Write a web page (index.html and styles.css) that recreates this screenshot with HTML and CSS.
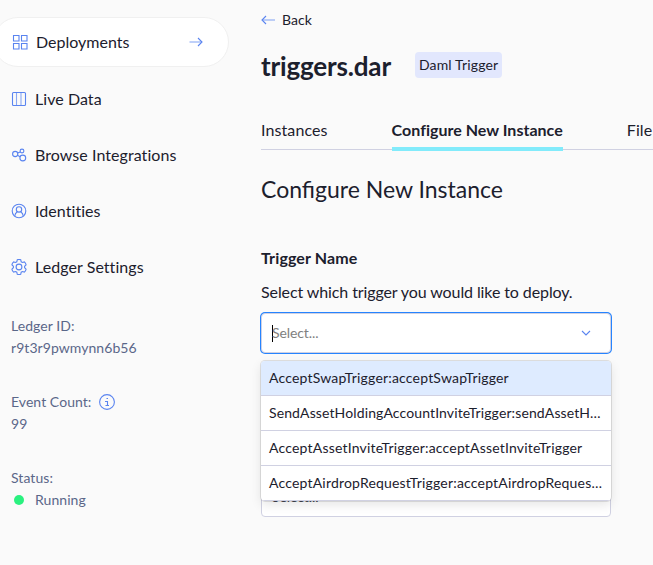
FILE: index.html
```html
<!DOCTYPE html>
<html lang="en">
<head>
<meta charset="utf-8">
<title>triggers.dar</title>
<link rel="stylesheet" href="styles.css">
</head>
<body>
<div class="app">
  <aside class="sidebar">
    <nav class="nav">
      <a class="nav-item active">
        <svg class="icon" viewBox="0 0 16 16"><path d="M1.5 1.500h5.500v5.500h-5.500zM9.500 1.500h5.500v5.500h-5.500zM1.500 9.500h5.500v5.500h-5.500zM9.500 9.500h5.500v5.500h-5.500z"/></svg>
        <span>Deployments</span>
        <svg class="arrow" viewBox="0 0 14 10"><path class="soft" d="M.5 5H13"/><path d="M9 1l4 4-4 4"/></svg>
      </a>
      <a class="nav-item">
        <svg class="icon" viewBox="0 0 16 16"><rect x="1.500" y="1.500" width="13" height="13" rx="1"/><path class="soft" d="M5.500 1.500v13M10 1.500v13"/></svg>
        <span>Live Data</span>
      </a>
      <a class="nav-item">
        <svg class="icon" viewBox="0 0 16 16"><circle cx="4.200" cy="7" r="2.600"/><circle cx="11" cy="4" r="1.900"/><circle cx="11.800" cy="11" r="2.900"/><path d="M6.600 6l2.600-1.100M6.300 8.300l2.900 1.500"/></svg>
        <span>Browse Integrations</span>
      </a>
      <a class="nav-item">
        <svg class="icon" viewBox="0 0 16 16"><circle cx="8" cy="8" r="6.800"/><circle cx="8" cy="6.400" r="2.700"/><path d="M3.700 13.200c.2-2.200 1.100-3.600 2.600-4.500M12.300 13.200c-.2-2.200-1.100-3.600-2.600-4.500"/></svg>
        <span>Identities</span>
      </a>
      <a class="nav-item">
        <svg class="icon" viewBox="0 0 16 16"><path d="M6.300.7q1.700-.6 3.400 0l.5 2.100 1.200.7 2-.6q1.400 1.200 1.700 2.900l-1.500 1.500v1.400l1.500 1.500q-.3 1.700-1.700 2.900l-2-.6-1.200.7-.5 2.100q-1.700.6-3.400 0l-.5-2.100-1.200-.7-2 .6q-1.400-1.200-1.700-2.900l1.500-1.500v-1.400l-1.500-1.500q.3-1.700 1.700-2.900l2 .6 1.200-.7z"/><circle cx="8" cy="8" r="2.900"/></svg>
        <span>Ledger Settings</span>
      </a>
    </nav>
    <dl class="meta">
      <div><dt>Ledger ID:</dt><dd>r9t3r9pwmynn6b56</dd></div>
      <div><dt>Event Count:<svg class="info" viewBox="0 0 16 16"><circle cx="8" cy="8" r="7.400"/><path d="M6 7.500h2.500v4M6.500 11.500h3.500M7.500 4.500h1.500"/></svg></dt><dd>99</dd></div>
      <div><dt>Status:</dt><dd class="status"><i class="dot"></i>Running</dd></div>
    </dl>
  </aside>
  <main class="main">
    <a class="back"><svg class="arrow" viewBox="0 0 14 10"><path class="soft" d="M1 5h13"/><path d="M5 1L1 5l4 4"/></svg>Back</a>
    <header class="title-row"><h1>triggers.dar</h1><span class="tag">Daml Trigger</span></header>
    <div class="tabs"><a class="tab">Instances</a><a class="tab current">Configure New Instance</a><a class="tab">File</a></div>
    <h2>Configure New Instance</h2>
    <form class="form">
      <label class="label">Trigger Name</label>
      <p class="hint">Select which trigger you would like to deploy.</p>
      <div class="select focused">
        <span class="caret"></span><span class="placeholder">Select...</span>
        <svg class="chevron" viewBox="0 0 10 6"><path d="M1 1l4 4 4-4"/></svg>
        <ul class="menu">
          <li class="highlighted">AcceptSwapTrigger:acceptSwapTrigger</li>
          <li class="long">SendAssetHoldingAccountInviteTrigger:sendAssetHoldingAccountInviteTrigger</li>
          <li>AcceptAssetInviteTrigger:acceptAssetInviteTrigger</li>
          <li>AcceptAirdropRequestTrigger:acceptAirdropRequestTrigger</li>
        </ul>
      </div>
      <div class="select second"><span class="placeholder">Select...</span></div>
    </form>
  </main>
</div>
</body>
</html>
```
FILE: styles.css
```css
* { box-sizing: border-box; }
body { margin: 0; background: #fafafa; color: #1c202d; font: 16px/24px Lato, sans-serif; letter-spacing: .06px; overflow: hidden; }
h1, h2, p, ul, dl, dd { margin: 0; padding: 0; }
svg { fill: none; stroke: #5a84f0; stroke-width: 1.1; flex: none; }
.soft { opacity: .7; }
.app { display: flex; height: 565px; overflow: hidden; }
.sidebar { width: 261px; flex: none; padding-top: 17px; }
.nav { display: flex; flex-direction: column; gap: 6px; }
.nav-item { display: flex; align-items: center; height: 50px; padding-left: 11px; }
.icon { width: 16px; height: 16px; margin-right: 8px; }
.active { width: 236px; margin-left: -7px; padding: 0 25px 0 18px; margin-bottom: 1px; background: #fff; border: 1px solid #f0f0f0; border-radius: 25px; letter-spacing: 0; }
.arrow { width: 14px; height: 10px; }
.active .arrow { margin-left: auto; }
.meta { padding: 23px 0 0 11px; display: flex; flex-direction: column; gap: 32px; color: #5a6789; font-size: 14px; line-height: 22px; }
.meta dt { display: flex; align-items: center; }
.info { width: 16px; height: 16px; margin-left: 8px; }
.status { display: flex; align-items: center; }
.dot { width: 10px; height: 10px; margin: 0 11px 0 3px; border-radius: 50%; background: #2af17f; }
.main { flex: none; width: 450px; }
.back { display: flex; align-items: center; gap: 7px; height: 20px; margin-top: 10px; font-size: 14px; }
.title-row { display: flex; align-items: center; gap: 24px; height: 32px; margin-top: 20px; }
.title-row h1 { font-size: 26px; line-height: 32px; font-weight: 700; letter-spacing: -.17px; }
.tag { height: 26px; padding: 0 4px; border-radius: 4px; background: #e2e7fd; font-size: 14px; line-height: 26px; margin-top: -2px; letter-spacing: .15px; }
.tabs { display: flex; gap: 64px; height: 33px; margin-top: 36px; background: linear-gradient(#d0d1e2, #d0d1e2) 0 31px / 100% 1px no-repeat; letter-spacing: .1px; }
.tab { height: 33px; white-space: nowrap; }
.current { font-weight: 700; border-bottom: 4px solid #82ebfb; letter-spacing: .02px; }
h2 { margin-top: 22px; font-size: 23px; line-height: 32px; font-weight: 400; letter-spacing: 0; }
.form { margin-top: 41px; width: 350px; }
.label { display: block; font-weight: 700; letter-spacing: .12px; }
.hint { margin-top: 10px; white-space: nowrap; letter-spacing: -.1px; }
.select { position: relative; display: flex; align-items: center; height: 40px; padding: 0 19px 0 10px; background: #fff; border: 1px solid #d0d1e2; border-radius: 4px; font-size: 14px; letter-spacing: 0; }
.focused { margin-top: 9px; box-shadow: 0 0 0 1px #2684ff; }
.caret { width: 1px; height: 17px; background: #000; margin-right: -1px; }
.placeholder { color: #808080; letter-spacing: -.1px; }
.second .placeholder { color: #444854; }
.chevron { width: 10px; height: 6px; margin-left: auto; }
.second { margin-top: 124px; }
.menu { position: absolute; z-index: 1; top: 47px; left: -1px; width: 350px; list-style: none; background: #fff; border-radius: 4px; box-shadow: 0 0 0 1px rgba(0,0,0,.1), 0 4px 11px rgba(0,0,0,.1); overflow: hidden; }
.menu li { height: 35px; padding: 0 8px; line-height: 34px; border-bottom: 1px solid #d0d1e2; white-space: nowrap; overflow: hidden; text-overflow: ellipsis; letter-spacing: .19px; }
.menu .long { letter-spacing: .12px; }
.menu .highlighted { background: #deebff; }
```
